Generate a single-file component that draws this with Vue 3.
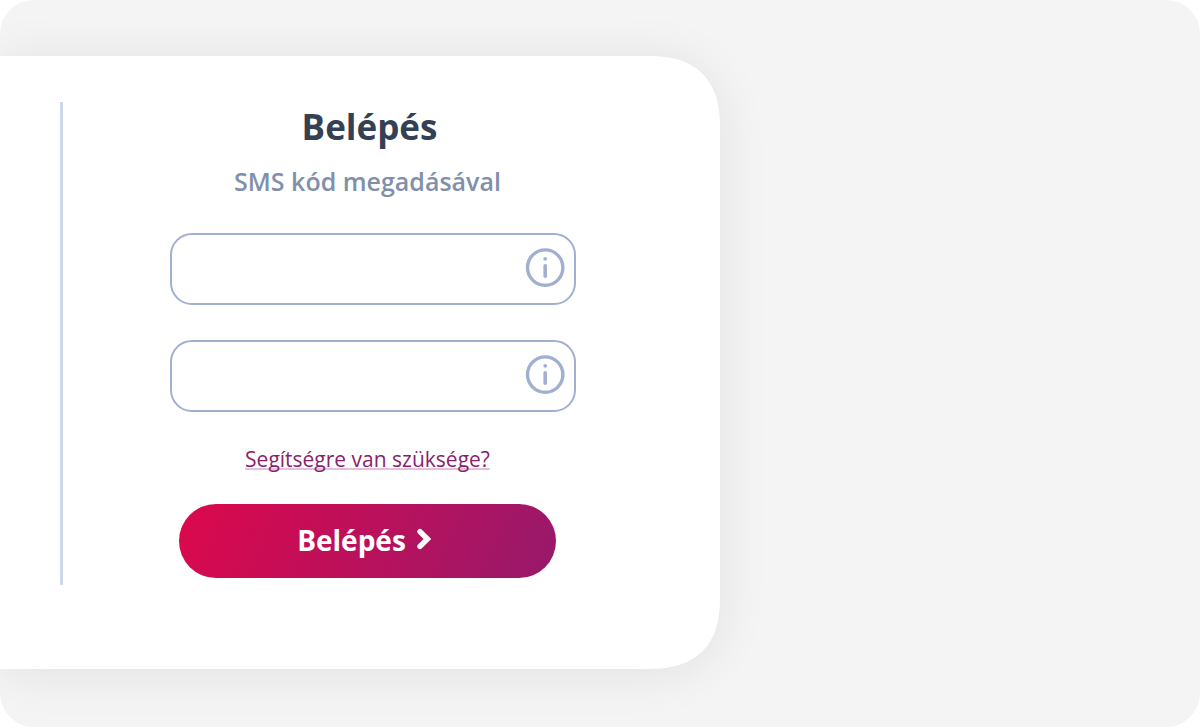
<script setup>
import { reactive } from 'vue'

const fields = reactive([
  { id: 'identifier', label: 'Azonosító', type: 'text', value: '' },
  { id: 'password', label: 'Jelszó', type: 'password', value: '' },
])
</script>

<template>
  <div class="page">
    <main class="panel">
      <form class="login" @submit.prevent>
        <h1>Belépés</h1>
        <p class="subtitle">SMS kód megadásával</p>
        <div v-for="field in fields" :key="field.id" class="field">
          <input
            :id="field.id"
            v-model="field.value"
            :type="field.type"
            :aria-label="field.label"
          />
          <button type="button" class="info" aria-label="Információ">
            <svg viewBox="0 0 40 40" fill="none" aria-hidden="true">
              <circle cx="20.2" cy="19.6" r="17.7" stroke="currentColor" stroke-width="3.4" />
              <circle cx="20.2" cy="10.8" r="1.9" fill="currentColor" />
              <path d="M20.2 17.8v10.4" stroke="currentColor" stroke-width="3.6" stroke-linecap="round" />
            </svg>
          </button>
        </div>
        <a class="help" href="#">Segítségre van szüksége?</a>
        <button type="submit" class="submit">
          <span>Belépés</span>
          <svg class="chevron" viewBox="0 0 14 22" fill="none" aria-hidden="true">
            <path d="M3 3.6L10.4 11L3 18.4" stroke="currentColor" stroke-width="5.4" stroke-linecap="round" stroke-linejoin="miter" />
          </svg>
        </button>
      </form>
    </main>
  </div>
</template>

<style>
body {
  background: #fff;
}
</style>

<style scoped>
.page {
  box-sizing: border-box;
  min-height: calc(100vh - 1px);
  padding: 56px 0 58px;
  overflow: hidden;
  border-radius: 34px;
  background: #f4f4f4;
  font-family: "Open Sans", "Noto Sans", sans-serif;
}

.panel {
  box-sizing: border-box;
  width: 60%;
  min-width: 640px;
  padding: 46px 60px 84px;
  border-radius: 0 60px 60px 0;
  background: #fff;
  box-shadow: 0 4px 52px rgba(0, 0, 0, 0.08);
}

@supports (corner-shape: superellipse(1.3)) {
  .panel {
    border-radius: 0 72px 72px 0;
    corner-shape: superellipse(1.3);
  }
}

.login {
  display: flex;
  flex-direction: column;
  align-items: center;
  box-sizing: border-box;
  width: 512px;
  min-height: 483px;
  padding-left: 100px;
  border-left: 3px solid #ced8e8;
}

h1 {
  margin: 0;
  padding-left: 4px;
  color: #344054;
  font-size: 35px;
  font-weight: 700;
  line-height: 50px;
}

.subtitle {
  margin: 12px 0 35px;
  color: #818fab;
  font-size: 25px;
  font-weight: 600;
  line-height: 34px;
}

.field {
  position: relative;
  align-self: stretch;
  margin: 0 -4px 35px 7px;
}

.field input {
  display: block;
  box-sizing: border-box;
  width: 100%;
  height: 72px;
  padding: 0 60px 0 20px;
  border: 2px solid #a1b0d0;
  border-radius: 22px;
  outline: none;
  background: #fff;
  color: #344054;
  font: 400 24px "Open Sans", sans-serif;
}

.info {
  position: absolute;
  top: 15px;
  right: 11px;
  width: 40px;
  height: 40px;
  padding: 0;
  border: 0;
  background: none;
  color: #a1b0d0;
}

.info svg {
  display: block;
  width: 100%;
}

.help {
  margin-top: -3px;
  color: #8a1e6c;
  font-size: 21px;
  line-height: 30px;
  text-decoration: underline;
  text-decoration-color: #e4bfdb;
  text-decoration-thickness: 2px;
  text-decoration-skip-ink: none;
}

.submit {
  display: flex;
  align-items: center;
  justify-content: center;
  gap: 11px;
  width: 377px;
  height: 74px;
  margin-top: 30px;
  padding: 0 7px 2px 0;
  border: 0;
  border-radius: 37px;
  background: linear-gradient(115deg, #dd084c, #97196b);
  color: #fff;
  font: 700 28px "Open Sans", sans-serif;
}

.chevron {
  width: 14px;
  height: 22px;
  margin-bottom: 2px;
}
</style>
